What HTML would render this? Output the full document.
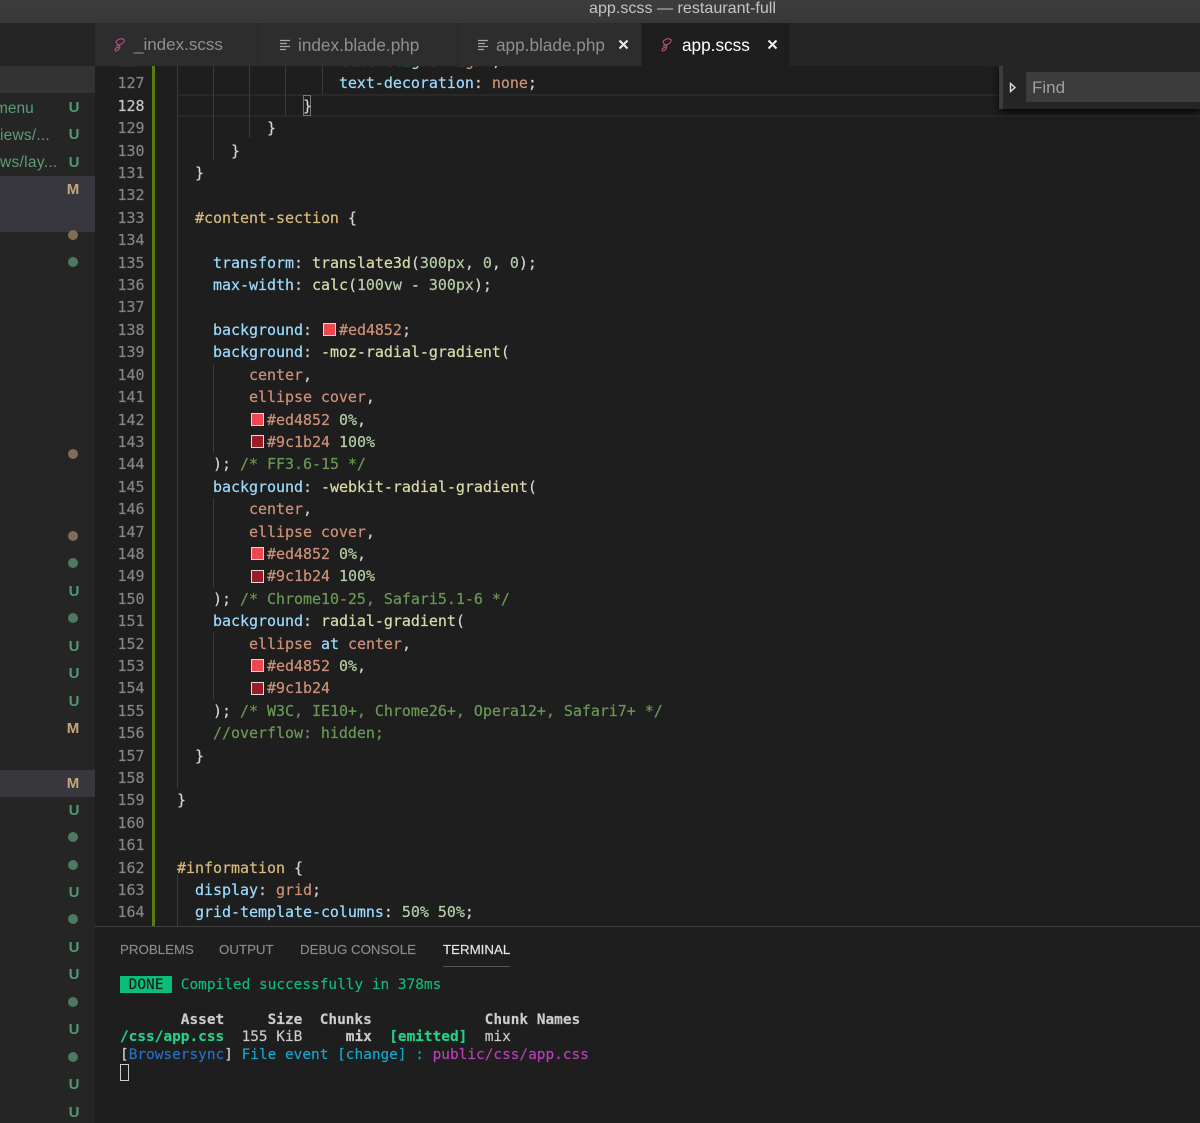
<!DOCTYPE html>
<html><head><meta charset="utf-8"><style>
html,body{margin:0;padding:0;background:#1e1e1e}
#r{position:relative;width:1200px;height:1123px;overflow:hidden;background:#1e1e1e;font-family:"Liberation Sans",sans-serif}
#r div,#r pre,#r svg{position:absolute;margin:0}
pre{font-family:"DejaVu Sans Mono","Liberation Mono",monospace;white-space:pre}
.code{left:177px;top:50px;font-size:15px;letter-spacing:-.035px;line-height:22.405px;color:#d4d4d4;-webkit-text-stroke:.2px}
.nums{left:100px;width:44.5px;top:50px;text-align:right;font-size:15px;letter-spacing:-.035px;line-height:22.405px;color:#858585;-webkit-text-stroke:.2px}
.p{color:#9cdcfe}.v{color:#ce9178}.f{color:#dcdcaa}.n{color:#b5cea8}.c{color:#6a9955}.s{color:#d7ba7d}
.sw{display:inline-block;box-sizing:border-box;width:13px;height:13px;margin:0 2.5px;border:1px solid #ddd;vertical-align:-1.5px}
.a{background:#ed4852}.b{background:#9c1b24}
.g{width:1px;background:#3a3a3a}
.tab{top:23px;height:43px;background:#2d2d2d;border-right:1px solid #252526;box-sizing:border-box}
.tt{top:35px;font-size:17.2px;line-height:20px;color:#8f8f8f;white-space:nowrap}
.x{top:34px;color:#fff;font-size:17px;line-height:20px;font-weight:bold}
.st{left:67px;width:14px;text-align:center;font-size:15px;font-weight:bold;line-height:16px;color:#4f9a73}
.m{color:#c4a77a}
.d{left:68px;width:10px;height:10px;border-radius:50%;background:#4c7a60}
.d.t{background:#7d6e55}
.fl{font-size:15.5px;line-height:18px;color:#5d9c78;white-space:nowrap;left:0}
.pt{top:941px;font-size:13.3px;line-height:18px;color:#8b8b8b;white-space:nowrap;-webkit-text-stroke:.15px}
.term{left:120px;font-size:14.43px;line-height:17.5px;white-space:pre;-webkit-text-stroke:.15px}
</style></head><body><div id="r">

<!-- sidebar -->
<div style="left:0;top:66px;width:95px;height:1057px;background:#252526"></div>
<div style="left:0;top:66px;width:95px;height:27px;background:#333334"></div>
<div style="left:0;top:176px;width:95px;height:56px;background:#37373d"></div>
<div style="left:0;top:770px;width:95px;height:27px;background:#37373d"></div>
<div class="fl" style="top:100px;left:-5px">menu</div>
<div class="fl" style="top:127px;letter-spacing:.2px">iews/...</div>
<div class="fl" style="top:154px;letter-spacing:.3px">ws/lay...</div>
<div class="st" style="top:100px">U</div>
<div class="st" style="top:127px">U</div>
<div class="st" style="top:155px">U</div>
<div class="st m" style="top:182px;left:66px">M</div>
<div class="d t" style="top:230px"></div>
<div class="d" style="top:257px"></div>
<div class="d t" style="top:449px"></div>
<div class="d t" style="top:531px"></div>
<div class="d" style="top:558px"></div>
<div class="st" style="top:584px">U</div>
<div class="d" style="top:613px"></div>
<div class="st" style="top:639px">U</div>
<div class="st" style="top:666px">U</div>
<div class="st" style="top:694px">U</div>
<div class="st m" style="top:721px;left:66px">M</div>
<div class="st m" style="top:776px;left:66px">M</div>
<div class="st" style="top:803px">U</div>
<div class="d" style="top:832px"></div>
<div class="d" style="top:860px"></div>
<div class="st" style="top:885px">U</div>
<div class="d" style="top:914px"></div>
<div class="st" style="top:940px">U</div>
<div class="st" style="top:967px">U</div>
<div class="d" style="top:997px"></div>
<div class="st" style="top:1022px">U</div>
<div class="d" style="top:1052px"></div>
<div class="st" style="top:1077px">U</div>
<div class="st" style="top:1105px">U</div>

<!-- gutter -->
<div style="left:152px;top:66px;width:3px;height:860px;background:#587c0c"></div>

<!-- current line -->
<div style="left:178px;top:94px;width:1022px;height:2px;background:#282828"></div>
<div style="left:178px;top:115px;width:1022px;height:2px;background:#282828"></div>

<!-- guides -->
<div class="g" style="left:177px;top:66px;height:722px"></div>
<div class="g" style="left:177px;top:875px;height:51px"></div>
<div class="g" style="left:213px;top:66px;height:95px"></div>
<div class="g" style="left:249px;top:66px;height:72px"></div>
<div class="g" style="left:285px;top:66px;height:50px"></div>
<div class="g" style="left:322px;top:66px;height:28px"></div>
<div class="g" style="left:213px;top:364px;height:89px"></div>
<div class="g" style="left:213px;top:498px;height:90px"></div>
<div class="g" style="left:213px;top:633px;height:66px"></div>

<!-- bracket match -->
<div style="left:303px;top:95px;width:8px;height:21px;box-sizing:border-box;border:1px solid #777"></div>

<pre class="nums">126
127
<span style="color:#c6c6c6">128</span>
129
130
131
132
133
134
135
136
137
138
139
140
141
142
143
144
145
146
147
148
149
150
151
152
153
154
155
156
157
158
159
160
161
162
163
164</pre>

<pre class="code">                  <span class="p">text-align</span>: <span class="v">right</span>;
                  <span class="p">text-decoration</span>: <span class="v">none</span>;
              }
          }
      }
  }

  <span class="s">#content-section</span> {

    <span class="p">transform</span>: <span class="f">translate3d</span>(<span class="n">300px</span>, <span class="n">0</span>, <span class="n">0</span>);
    <span class="p">max-width</span>: <span class="f">calc</span>(<span class="n">100vw</span> - <span class="n">300px</span>);

    <span class="p">background</span>: <span class="sw a"></span><span class="v">#ed4852</span>;
    <span class="p">background</span>: <span class="f">-moz-radial-gradient</span>(
        <span class="v">center</span>,
        <span class="v">ellipse cover</span>,
        <span class="sw a"></span><span class="v">#ed4852</span> <span class="n">0%</span>,
        <span class="sw b"></span><span class="v">#9c1b24</span> <span class="n">100%</span>
    ); <span class="c">/* FF3.6-15 */</span>
    <span class="p">background</span>: <span class="f">-webkit-radial-gradient</span>(
        <span class="v">center</span>,
        <span class="v">ellipse cover</span>,
        <span class="sw a"></span><span class="v">#ed4852</span> <span class="n">0%</span>,
        <span class="sw b"></span><span class="v">#9c1b24</span> <span class="n">100%</span>
    ); <span class="c">/* Chrome10-25, Safari5.1-6 */</span>
    <span class="p">background</span>: <span class="f">radial-gradient</span>(
        <span class="v">ellipse</span> <span class="p">at</span> <span class="v">center</span>,
        <span class="sw a"></span><span class="v">#ed4852</span> <span class="n">0%</span>,
        <span class="sw b"></span><span class="v">#9c1b24</span>
    ); <span class="c">/* W3C, IE10+, Chrome26+, Opera12+, Safari7+ */</span>
    <span class="c">//overflow: hidden;</span>
  }

}


<span class="s">#information</span> {
  <span class="p">display</span>: <span class="v">grid</span>;
  <span class="p">grid-template-columns</span>: <span class="n">50%</span> <span class="n">50%</span>;</pre>

<!-- find widget -->
<div style="left:1000px;top:66px;width:200px;height:43px;background:#252526;box-shadow:0 2px 8px #000"></div>
<div style="left:999px;top:66px;width:4px;height:43px;background:#3c3c3c"></div>
<svg style="left:1008px;top:82px" width="9" height="11" viewBox="0 0 9 11"><path d="M2.5 1.5 L7 5.5 L2.5 9.5 Z" fill="#252526" stroke="#e0e0e0" stroke-width="1.4"/></svg>
<div style="left:1026px;top:72px;width:174px;height:30px;background:#3c3c3c"></div>
<div style="left:1032px;top:78px;font-size:17px;line-height:20px;color:#a0a0a0">Find</div>

<!-- panel -->
<div style="left:95px;top:926px;width:1105px;height:197px;background:#1e1e1e"></div>
<div style="left:95px;top:926px;width:1105px;height:1px;background:#414141"></div>
<div class="pt" style="left:120px">PROBLEMS</div>
<div class="pt" style="left:219px">OUTPUT</div>
<div class="pt" style="left:300px">DEBUG CONSOLE</div>
<div class="pt" style="left:443px;color:#e7e7e7">TERMINAL</div>
<div style="left:443px;top:966px;width:67px;height:1px;background:#555"></div>
<div style="left:120px;top:976px;width:52px;height:17px;background:#0dbc79"></div>
<pre class="term" style="top:977px;left:120px"><span style="color:#1e1e1e"> DONE </span> <span style="color:#0dbc79">Compiled successfully in 378ms</span></pre>
<pre class="term" style="top:1012px;color:#ccc"><b>       Asset     Size  Chunks             Chunk Names</b></pre>
<pre class="term" style="top:1029px;color:#ccc"><b style="color:#23d18b">/css/app.css</b>  155 KiB     <b>mix</b>  <b style="color:#23d18b">[emitted]</b>  mix</pre>
<pre class="term" style="top:1047px;color:#ccc">[<span style="color:#2472c8">Browsersync</span>] <span style="color:#11a8cd">File event [change] : </span><span style="color:#bc3fbc">public/css/app.css</span></pre>
<div style="left:120px;top:1064px;width:9px;height:17px;box-sizing:border-box;border:1.5px solid #ccc"></div>

<!-- tabs -->
<div style="left:0;top:23px;width:1200px;height:43px;background:#252526"></div>
<div class="tab" style="left:95px;width:163px"></div>
<div class="tab" style="left:258px;width:200px"></div>
<div class="tab" style="left:458px;width:184px"></div>
<div class="tab" style="left:642px;width:148px;background:#1e1e1e"></div>
<svg style="left:112px;top:37px" width="14" height="16" viewBox="0 0 14 16"><path d="M4 9 C9 8 13 5 12 3 C11 1 7 1.5 5 3.5 C3 5.5 5 7 7 8 C8.5 9 8 11 6 13 C4.5 14.5 2.5 14 3 12.5 C3.3 11.5 5 10.5 7 10" fill="none" stroke="#c6538c" stroke-width="1"/></svg>
<div class="tt" style="left:134px;font-size:17px">_index.scss</div>
<svg style="left:279px;top:39px" width="12" height="12" viewBox="0 0 12 12"><path d="M1 2h10M1 5h7M1 8h10M1 11h6" stroke="#a8a8a8" stroke-width="1.2" transform="translate(0,-.5)"/></svg>
<div class="tt" style="left:298px">index.blade.php</div>
<svg style="left:477px;top:39px" width="12" height="12" viewBox="0 0 12 12"><path d="M1 2h10M1 5h7M1 8h10M1 11h6" stroke="#a8a8a8" stroke-width="1.2" transform="translate(0,-.5)"/></svg>
<div class="tt" style="left:496px">app.blade.php</div>
<svg style="left:618px;top:39px" width="11" height="11" viewBox="0 0 11 11"><path d="M1.5 1.5L9.5 9.5M9.5 1.5L1.5 9.5" stroke="#eee" stroke-width="2"/></svg>
<svg style="left:659px;top:37px" width="14" height="16" viewBox="0 0 14 16"><path d="M4 9 C9 8 13 5 12 3 C11 1 7 1.5 5 3.5 C3 5.5 5 7 7 8 C8.5 9 8 11 6 13 C4.5 14.5 2.5 14 3 12.5 C3.3 11.5 5 10.5 7 10" fill="none" stroke="#c6538c" stroke-width="1"/></svg>
<div class="tt" style="left:682px;color:#fff">app.scss</div>
<svg style="left:767px;top:39px" width="11" height="11" viewBox="0 0 11 11"><path d="M1.5 1.5L9.5 9.5M9.5 1.5L1.5 9.5" stroke="#eee" stroke-width="2"/></svg>

<!-- title bar -->
<div style="left:0;top:0;width:1200px;height:23px;background:linear-gradient(#3d3d3d,#383838)"></div>
<div style="left:589px;top:0;height:18px;font-size:16.1px;line-height:17px;color:#c4c4c4;white-space:nowrap">app.scss — restaurant-full</div>

</div></body></html>
